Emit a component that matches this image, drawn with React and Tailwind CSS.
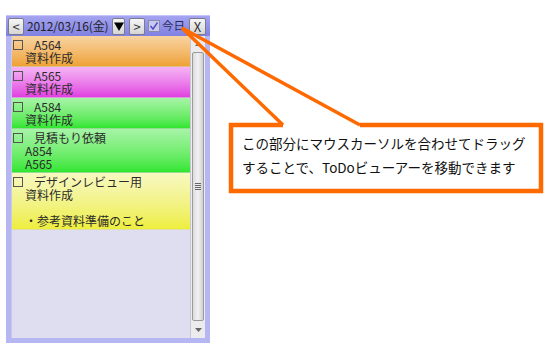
import React from "react";

const FONT = { fontFamily: '"Noto Sans CJK JP", "Noto Sans", sans-serif' };

function Btn({ children, className = "" }) {
  return (
    <div
      className={
        "flex items-center justify-center h-[17px] rounded-[2px] border border-[#7a7a8a] bg-gradient-to-b from-[#f6f6f6] to-[#d6d6d6] text-[#333] text-[13px] leading-none shrink-0 " +
        className
      }
    >
      {children}
    </div>
  );
}

function Box() {
  return <span className="inline-block w-[10px] h-[10px] border border-[#555] shrink-0" />;
}

function Item({ grad, title, lines }) {
  return (
    <div className={"pt-[2px] pb-[2px] pl-[1px] text-[12px] leading-[13px] text-[#2a2a2a] border-b border-black/10 " + grad}>
      <div className="flex items-center h-[13px]">
        <Box />
        <span className="ml-[11px]">{title}</span>
      </div>
      {lines.map((l, i) => (
        <div key={i} className="pl-[12px] h-[13px] whitespace-pre">
          {l}
        </div>
      ))}
    </div>
  );
}

export default function App() {
  return (
    <div className="relative w-[554px] h-[356px] bg-white overflow-hidden" style={FONT}>
      <div className="pl-[6px] pt-[15px]">
        <div className="w-[204px] h-[328px] bg-[#b6b6f2] flex flex-col">
          {/* toolbar */}
          <div className="h-[21px] bg-gradient-to-b from-[#a4a4f0] to-[#8080e2] border-t border-[#c4c4f6] flex items-center pl-[2px]">
            <Btn className="w-[16px]">&lt;</Btn>
            <span className="ml-[3px] w-[84px] shrink-0 text-[12px] text-[#222] leading-none whitespace-nowrap tracking-[-0.1px]">
              2012/03/16(金)
            </span>
            <Btn className="ml-[1px] w-[13px]">
              <svg width="10" height="9" viewBox="0 0 10 9">
                <polygon points="0,0.5 10,0.5 5,9" fill="#000" />
              </svg>
            </Btn>
            <Btn className="ml-[4px] w-[16px]">&gt;</Btn>
            <div className="ml-[3px] w-[12px] h-[12px] border border-[#8a8ab0] bg-[#c9c9ee] flex items-center justify-center shrink-0">
              <svg width="10" height="10" viewBox="0 0 10 10">
                <path d="M1.5 5 L4 8 L8.5 1.5" fill="none" stroke="#4a4ac8" strokeWidth="1.4" />
              </svg>
            </div>
            <span className="ml-[2px] w-[22px] shrink-0 text-[11.5px] text-[#2a2a5a] leading-none whitespace-nowrap">今日</span>
            <Btn className="ml-[5px] w-[17px] text-[12px]">X</Btn>
          </div>
          {/* body */}
          <div className="flex-1 flex pl-[5px] pr-[5px] pb-[5px]">
            <div className="w-[179px] bg-[#dedef0] border-l border-[#c8c8e8]">
              <Item grad="bg-gradient-to-b from-[#f8d4a0] to-[#eea232]" title="A564" lines={["資料作成"]} />
              <Item grad="bg-gradient-to-b from-[#f4b4f4] to-[#e03ee0]" title="A565" lines={["資料作成"]} />
              <Item grad="bg-gradient-to-b from-[#a6f4a6] to-[#2ee62e]" title="A584" lines={["資料作成"]} />
              <Item grad="bg-gradient-to-b from-[#a6f4a6] to-[#2ee62e]" title="見積もり依頼" lines={["A854", "A565"]} />
              <Item
                grad="bg-gradient-to-b from-[#f8f8c0] to-[#eeee3a]"
                title="デザインレビュー用"
                lines={["資料作成", " ", "・参考資料準備のこと"]}
              />
            </div>
            {/* scrollbar */}
            <div className="w-[15px] bg-[#ececec] border-l border-[#c8c8d8] flex flex-col">
              <div className="h-[16px] flex items-center justify-center">
                <svg width="7" height="4" viewBox="0 0 7 4">
                  <polygon points="0,4 7,4 3.5,0" fill="#666" />
                </svg>
              </div>
              <div className="flex-1 mx-[1px] rounded-[2px] border border-[#9a9a9a] bg-gradient-to-r from-[#dcdcdc] via-[#f2f2f2] to-[#d0d0d0] flex items-center justify-center">
                <div className="flex flex-col gap-[1px]">
                  <div className="w-[6px] h-[1px] bg-[#666]" />
                  <div className="w-[6px] h-[1px] bg-[#666]" />
                  <div className="w-[6px] h-[1px] bg-[#666]" />
                  <div className="w-[6px] h-[1px] bg-[#666]" />
                </div>
              </div>
              <div className="h-[17px] flex items-center justify-center">
                <svg width="7" height="4" viewBox="0 0 7 4">
                  <polygon points="0,0 7,0 3.5,4" fill="#666" />
                </svg>
              </div>
            </div>
          </div>
        </div>
      </div>

      {/* callout */}
      <svg className="absolute left-0 top-0 pointer-events-none" width="554" height="356" viewBox="0 0 554 356">
        <rect x="231" y="125" width="310" height="66" fill="#fff" />
        <path
          d="M283 125 L231 125 L231 191 L541 191 L541 125 L360 125"
          fill="none"
          stroke="#ff6a00"
          strokeWidth="4.5"
          strokeLinejoin="miter"
        />
        <path d="M283 125 L182 28 L360 125" fill="none" stroke="#ff6a00" strokeWidth="3.5" strokeLinejoin="miter" />
      </svg>
      <div className="absolute left-[242px] top-[131px] text-[13.5px] leading-[24px] text-[#111] whitespace-nowrap">
        <div>この部分にマウスカーソルを合わせてドラッグ</div>
        <div>することで、ToDoビューアーを移動できます</div>
      </div>
    </div>
  );
}
